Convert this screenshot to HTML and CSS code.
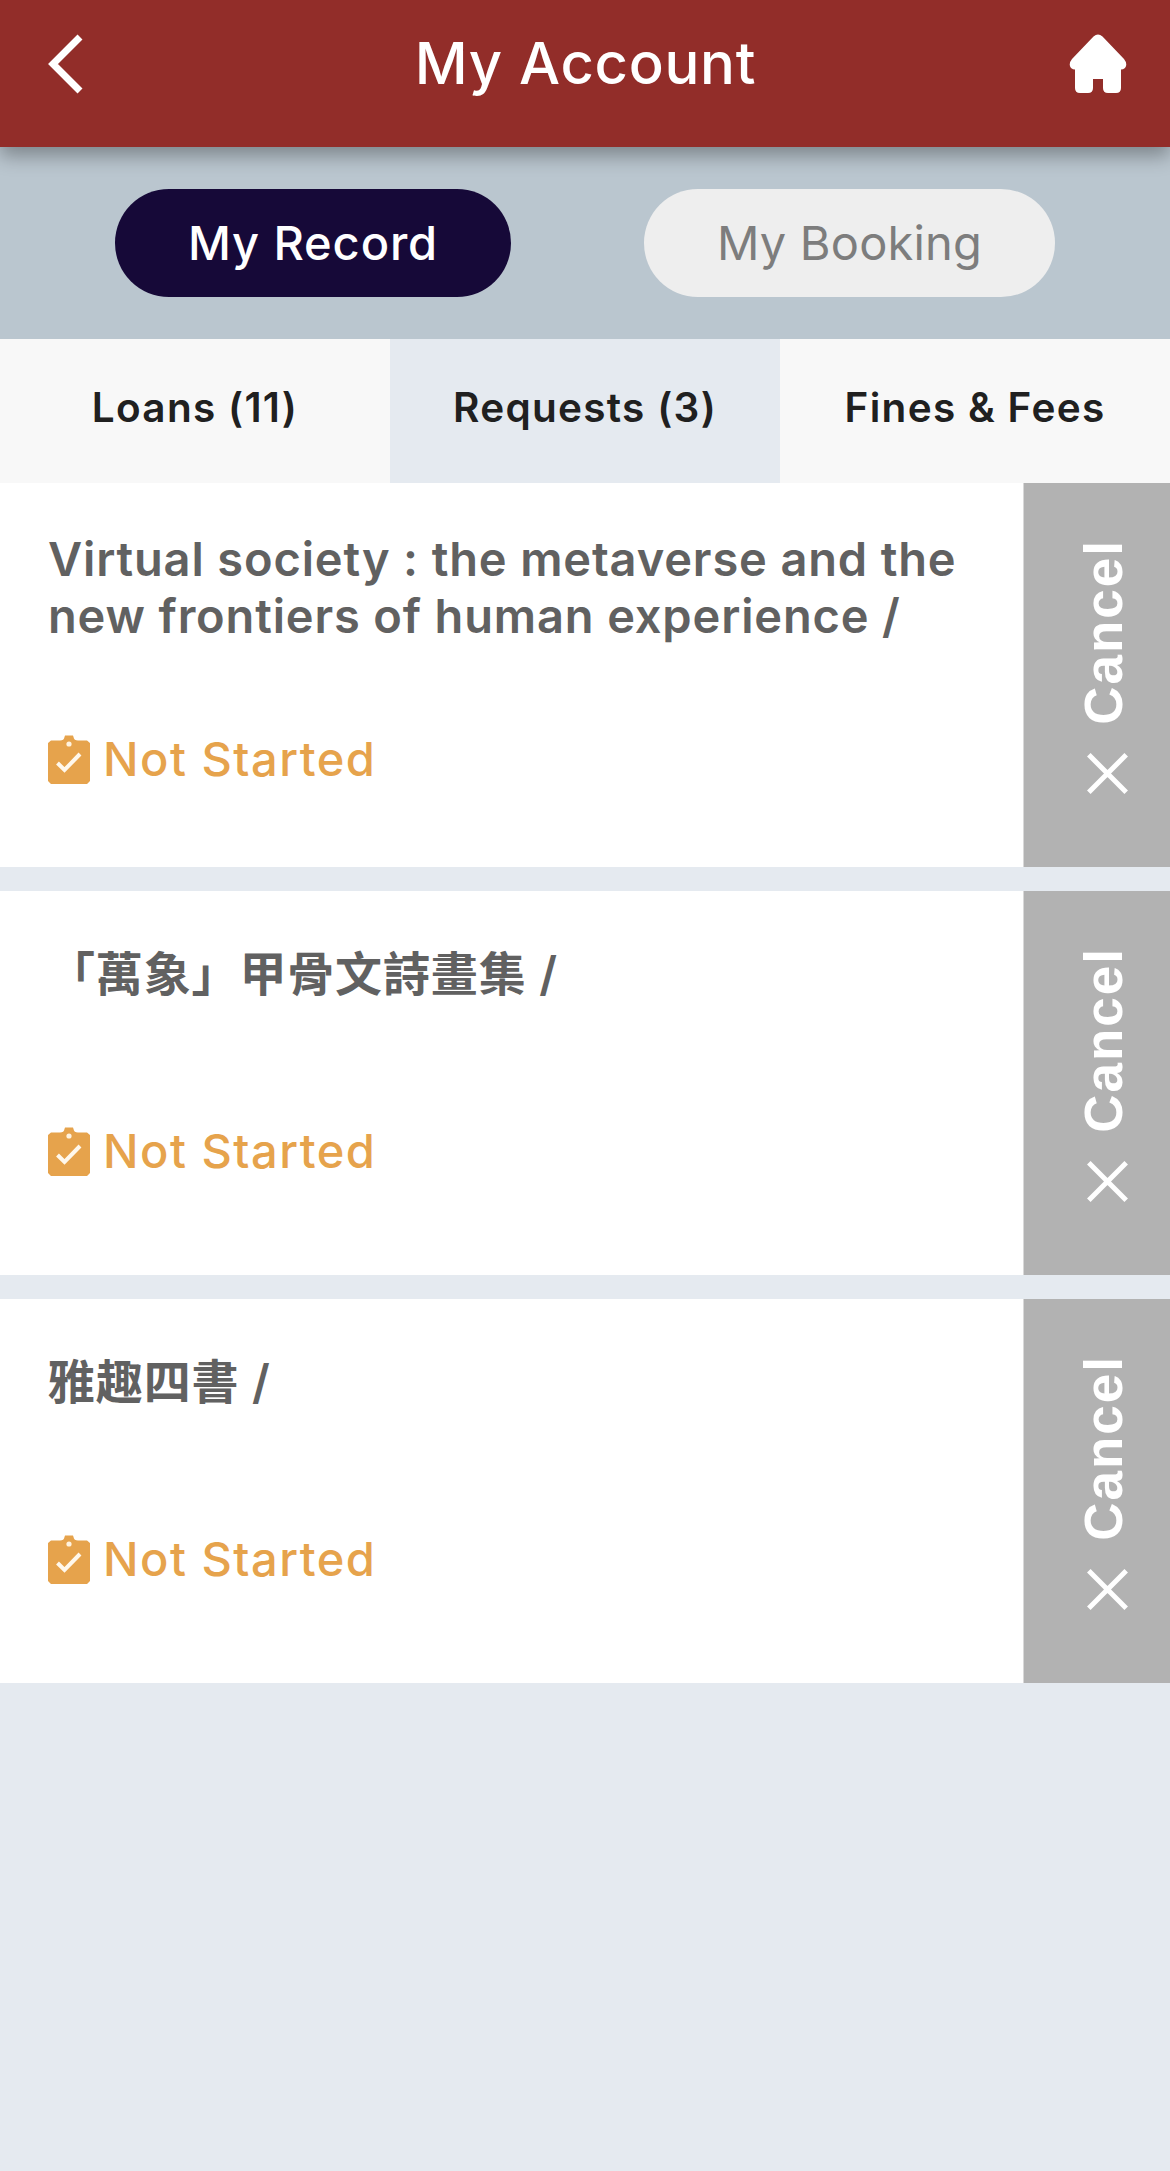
FILE: index.html
```html
<!DOCTYPE html>
<html lang="en">
<head>
  <meta charset="UTF-8" />
  <title>My Account</title>
  <link rel="stylesheet" href="styles.css">
</head>
<body>
  <header class="topbar">
    <a class="back" href="#" aria-label="Back">
      <svg width="36" height="60" viewBox="0 0 36 60"><path d="M32 3 L5 30 L32 57" /></svg>
    </a>
    <h1>My Account</h1>
    <a class="home" href="#" aria-label="Home">
      <svg width="58" height="60" viewBox="0 0 58 60">
        <path d="M24.500 2.500 Q29 -1.500 33.500 2.500 L55 25 Q59 30 56 34 Q54 35.500 52 35.500 V54 Q52 59 47 59 H39 Q34 59 34 54 V45 H24 V54 Q24 59 19 59 H11 Q6 59 6 54 V35.500 Q4 35.500 2 34 Q-1 30 3 25 Z" />
      </svg>
    </a>
  </header>

  <nav class="switcher">
    <button class="pill record active">My Record</button>
    <button class="pill booking">My Booking</button>
  </nav>

  <nav class="tabs">
    <a class="tab" href="#">Loans (11)</a>
    <a class="tab active" href="#">Requests (3)</a>
    <a class="tab" href="#">Fines &amp; Fees</a>
  </nav>

  <svg class="defs" width="0" height="0">
    <symbol id="clipboard" viewBox="0 0 42 49">
      <path fill="#e6a34c" d="M3 5.500 H12 Q16 5.500 16.500 2 L17 0.500 H25 L25.500 2 Q26 5.500 30 5.500 H39 L42 8 V46 L39 49 H3 L0 46 V8 Z" />
      <circle cx="21" cy="9" r="2.6" fill="#fff3df" />
      <path fill="none" stroke="#fff8ec" stroke-width="4" d="M9.500 28 L16.500 35 L32 19" />
    </symbol>
    <symbol id="cross" viewBox="0 0 41 41">
      <path fill="none" stroke="#fff" stroke-width="5" d="M1.800 1.800 L39.200 39.200 M39.200 1.800 L1.800 39.200" />
    </symbol>
  </svg>

  <main class="list">
    <article class="card">
      <div class="info">
        <h2>Virtual society : the metaverse and the new frontiers of human experience /</h2>
        <p class="status"><svg width="42" height="49"><use href="#clipboard" /></svg><span>Not Started</span></p>
      </div>
      <button class="cancel"><svg width="41" height="41"><use href="#cross" /></svg><span>Cancel</span></button>
    </article>

    <article class="card short">
      <div class="info">
        <h2 lang="zh-Hant">「萬象」甲骨文詩畫集 /</h2>
        <p class="status"><svg width="42" height="49"><use href="#clipboard" /></svg><span>Not Started</span></p>
      </div>
      <button class="cancel"><svg width="41" height="41"><use href="#cross" /></svg><span>Cancel</span></button>
    </article>

    <article class="card short">
      <div class="info">
        <h2 lang="zh-Hant">雅趣四書 /</h2>
        <p class="status"><svg width="42" height="49"><use href="#clipboard" /></svg><span>Not Started</span></p>
      </div>
      <button class="cancel"><svg width="41" height="41"><use href="#cross" /></svg><span>Cancel</span></button>
    </article>
  </main>
</body>
</html>
```
FILE: styles.css
```css
:root {
  --bg: #e5eaf0;
  --header: #922d29;
  --bar: #bac6cf;
  --primary: #160938;
  --accent: #e6a34c;
}

* {
  box-sizing: border-box;
}

body {
  margin: 0;
  min-height: 100vh;
  font-family: Inter, "Noto Sans CJK TC", sans-serif;
  background-color: var(--bg);
}

a {
  text-decoration: none;
}

button {
  border: none;
  padding: 0;
  font-family: inherit;
  cursor: pointer;
}

svg {
  display: block;
}

.defs {
  display: none;
}

.topbar {
  position: relative;
  z-index: 1;
  height: 147px;
  padding: 0 43px 20px 48px;
  display: flex;
  align-items: center;
  justify-content: space-between;
  background-color: var(--header);
  color: white;
  box-shadow: 0 9px 18px rgba(0, 0, 0, 0.32);
}

.topbar h1 {
  margin: 0 4px 1px 0;
  font-size: 58px;
  font-weight: 500;
  line-height: 70px;
  letter-spacing: 0.7px;
}

.back {
  width: 58px;
}

.back path {
  fill: none;
  stroke: white;
  stroke-width: 7;
}

.home path {
  fill: white;
}

.switcher {
  height: 192px;
  padding: 0 115px;
  display: flex;
  align-items: center;
  justify-content: space-between;
  background-color: var(--bar);
}

.pill {
  height: 108px;
  border-radius: 54px;
  padding-bottom: 2px;
  font-size: 47px;
  letter-spacing: 0.2px;
  background-color: #eee;
  color: #7d7d7d;
}

.pill.record {
  width: 396px;
}

.pill.booking {
  width: 411px;
}

.pill.active {
  background-color: var(--primary);
  color: white;
  font-weight: 500;
  letter-spacing: 0.9px;
}

.tabs {
  height: 144px;
  display: grid;
  grid-template-columns: repeat(3, 1fr);
}

.tab {
  padding-top: 44px;
  text-align: center;
  font-size: 40.5px;
  line-height: 49px;
  font-weight: 600;
  letter-spacing: 1.3px;
  background-color: #f8f8f8;
  color: #202020;
}

.tab.active {
  background-color: var(--bg);
}

.list {
  display: flex;
  flex-direction: column;
  gap: 24px;
}

.card {
  height: 384px;
  display: flex;
  background-color: white;
}

.info {
  flex: 1;
  padding: 47px 48px 0;
}

.info h2 {
  margin: 0;
  height: 114px;
  font-size: 47px;
  line-height: 57px;
  font-weight: 600;
  letter-spacing: 0.85px;
  color: #616161;
}

.status {
  margin: 91px 0 0;
  display: flex;
  align-items: center;
  gap: 13px;
  height: 49px;
  font-size: 47px;
  font-weight: 500;
  letter-spacing: 1.5px;
  color: var(--accent);
}

.status span {
  padding-bottom: 2px;
}

.short h2 {
  height: 98px;
  padding-top: 7px;
}

.cancel {
  width: 147px;
  border-left: 1px solid #d8d8d8;
  padding: 56px 0 73px 21px;
  display: flex;
  flex-direction: column-reverse;
  align-items: center;
  justify-content: space-between;
  background-color: #b2b2b2;
  color: white;
}

.cancel span {
  writing-mode: vertical-rl;
  transform: rotate(180deg);
  margin-right: 7px;
  font-family: "Liberation Sans", sans-serif;
  font-size: 53px;
  font-weight: 700;
  letter-spacing: 2px;
  line-height: 60px;
}
```
